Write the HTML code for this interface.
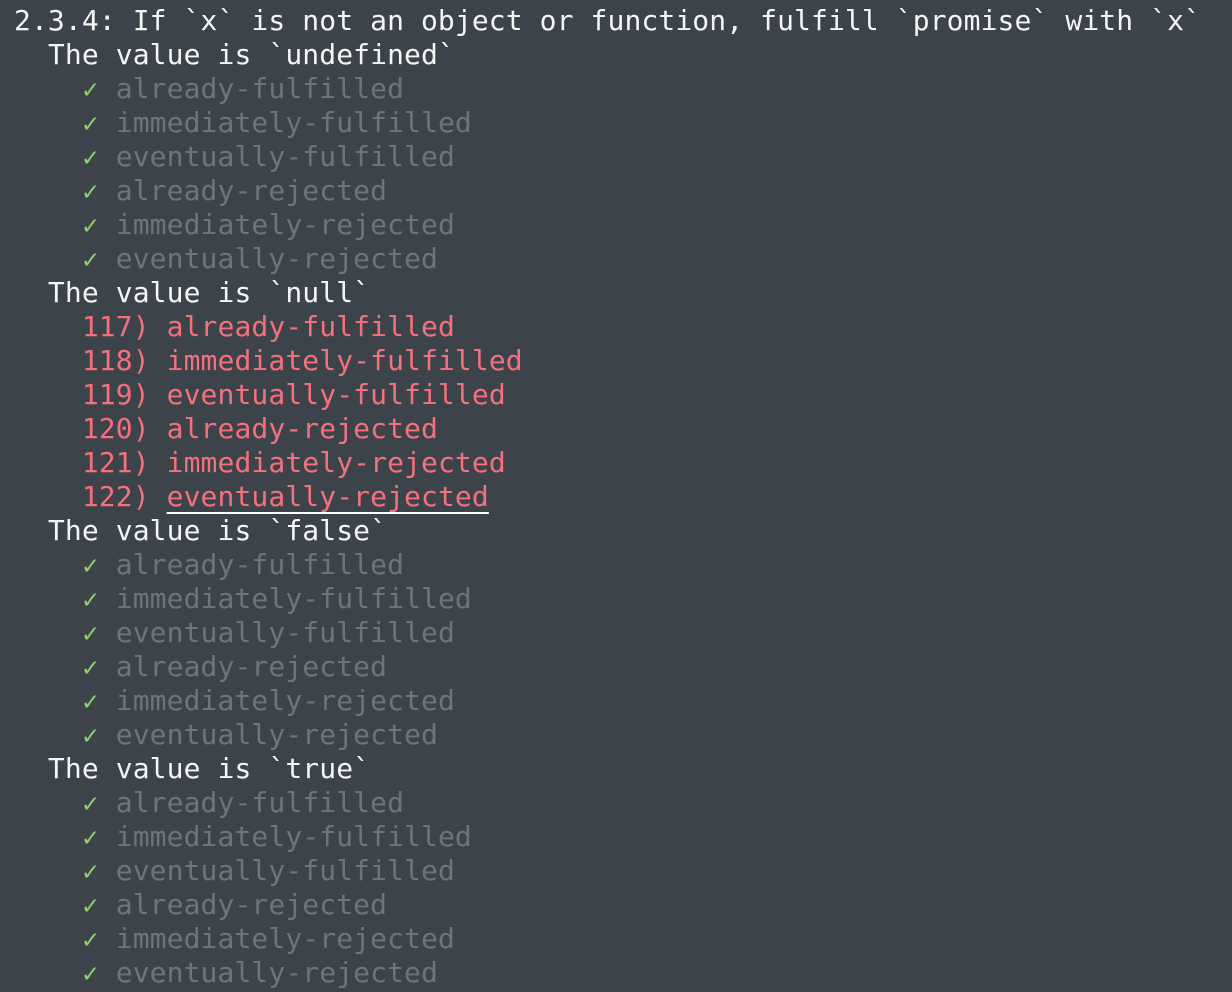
<!DOCTYPE html>
<html><head><style>
html,body{margin:0;padding:0;background:#3c434a;width:1232px;height:992px;overflow:hidden}
#t{position:absolute;left:14px;top:4px;font-family:"DejaVu Sans Mono","Liberation Mono",monospace;font-size:28px;line-height:34px;color:#f4f6f6;letter-spacing:0.1px}
#t div{height:34px;white-space:pre;overflow:visible}
.g{color:#6d747a}.c{color:#8fd36a;display:inline-block;width:16.96px;text-align:center;font-size:26px;font-weight:bold;line-height:0}.r{color:#f2717d}.u{text-decoration:underline;text-decoration-color:#fff;text-underline-offset:6px;text-decoration-thickness:2px}
</style></head><body><div id="t">
<div>2.3.4: If `x` is not an object or function, fulfill `promise` with `x`</div>
<div>  The value is `undefined`</div>
<div>    <span class="c">✓</span> <span class="g">already-fulfilled</span></div>
<div>    <span class="c">✓</span> <span class="g">immediately-fulfilled</span></div>
<div>    <span class="c">✓</span> <span class="g">eventually-fulfilled</span></div>
<div>    <span class="c">✓</span> <span class="g">already-rejected</span></div>
<div>    <span class="c">✓</span> <span class="g">immediately-rejected</span></div>
<div>    <span class="c">✓</span> <span class="g">eventually-rejected</span></div>
<div>  The value is `null`</div>
<div>    <span class="r">117) already-fulfilled</span></div>
<div>    <span class="r">118) immediately-fulfilled</span></div>
<div>    <span class="r">119) eventually-fulfilled</span></div>
<div>    <span class="r">120) already-rejected</span></div>
<div>    <span class="r">121) immediately-rejected</span></div>
<div>    <span class="r">122) <span class="u">eventually-rejected</span></span></div>
<div>  The value is `false`</div>
<div>    <span class="c">✓</span> <span class="g">already-fulfilled</span></div>
<div>    <span class="c">✓</span> <span class="g">immediately-fulfilled</span></div>
<div>    <span class="c">✓</span> <span class="g">eventually-fulfilled</span></div>
<div>    <span class="c">✓</span> <span class="g">already-rejected</span></div>
<div>    <span class="c">✓</span> <span class="g">immediately-rejected</span></div>
<div>    <span class="c">✓</span> <span class="g">eventually-rejected</span></div>
<div>  The value is `true`</div>
<div>    <span class="c">✓</span> <span class="g">already-fulfilled</span></div>
<div>    <span class="c">✓</span> <span class="g">immediately-fulfilled</span></div>
<div>    <span class="c">✓</span> <span class="g">eventually-fulfilled</span></div>
<div>    <span class="c">✓</span> <span class="g">already-rejected</span></div>
<div>    <span class="c">✓</span> <span class="g">immediately-rejected</span></div>
<div>    <span class="c">✓</span> <span class="g">eventually-rejected</span></div>
</div></body></html>
